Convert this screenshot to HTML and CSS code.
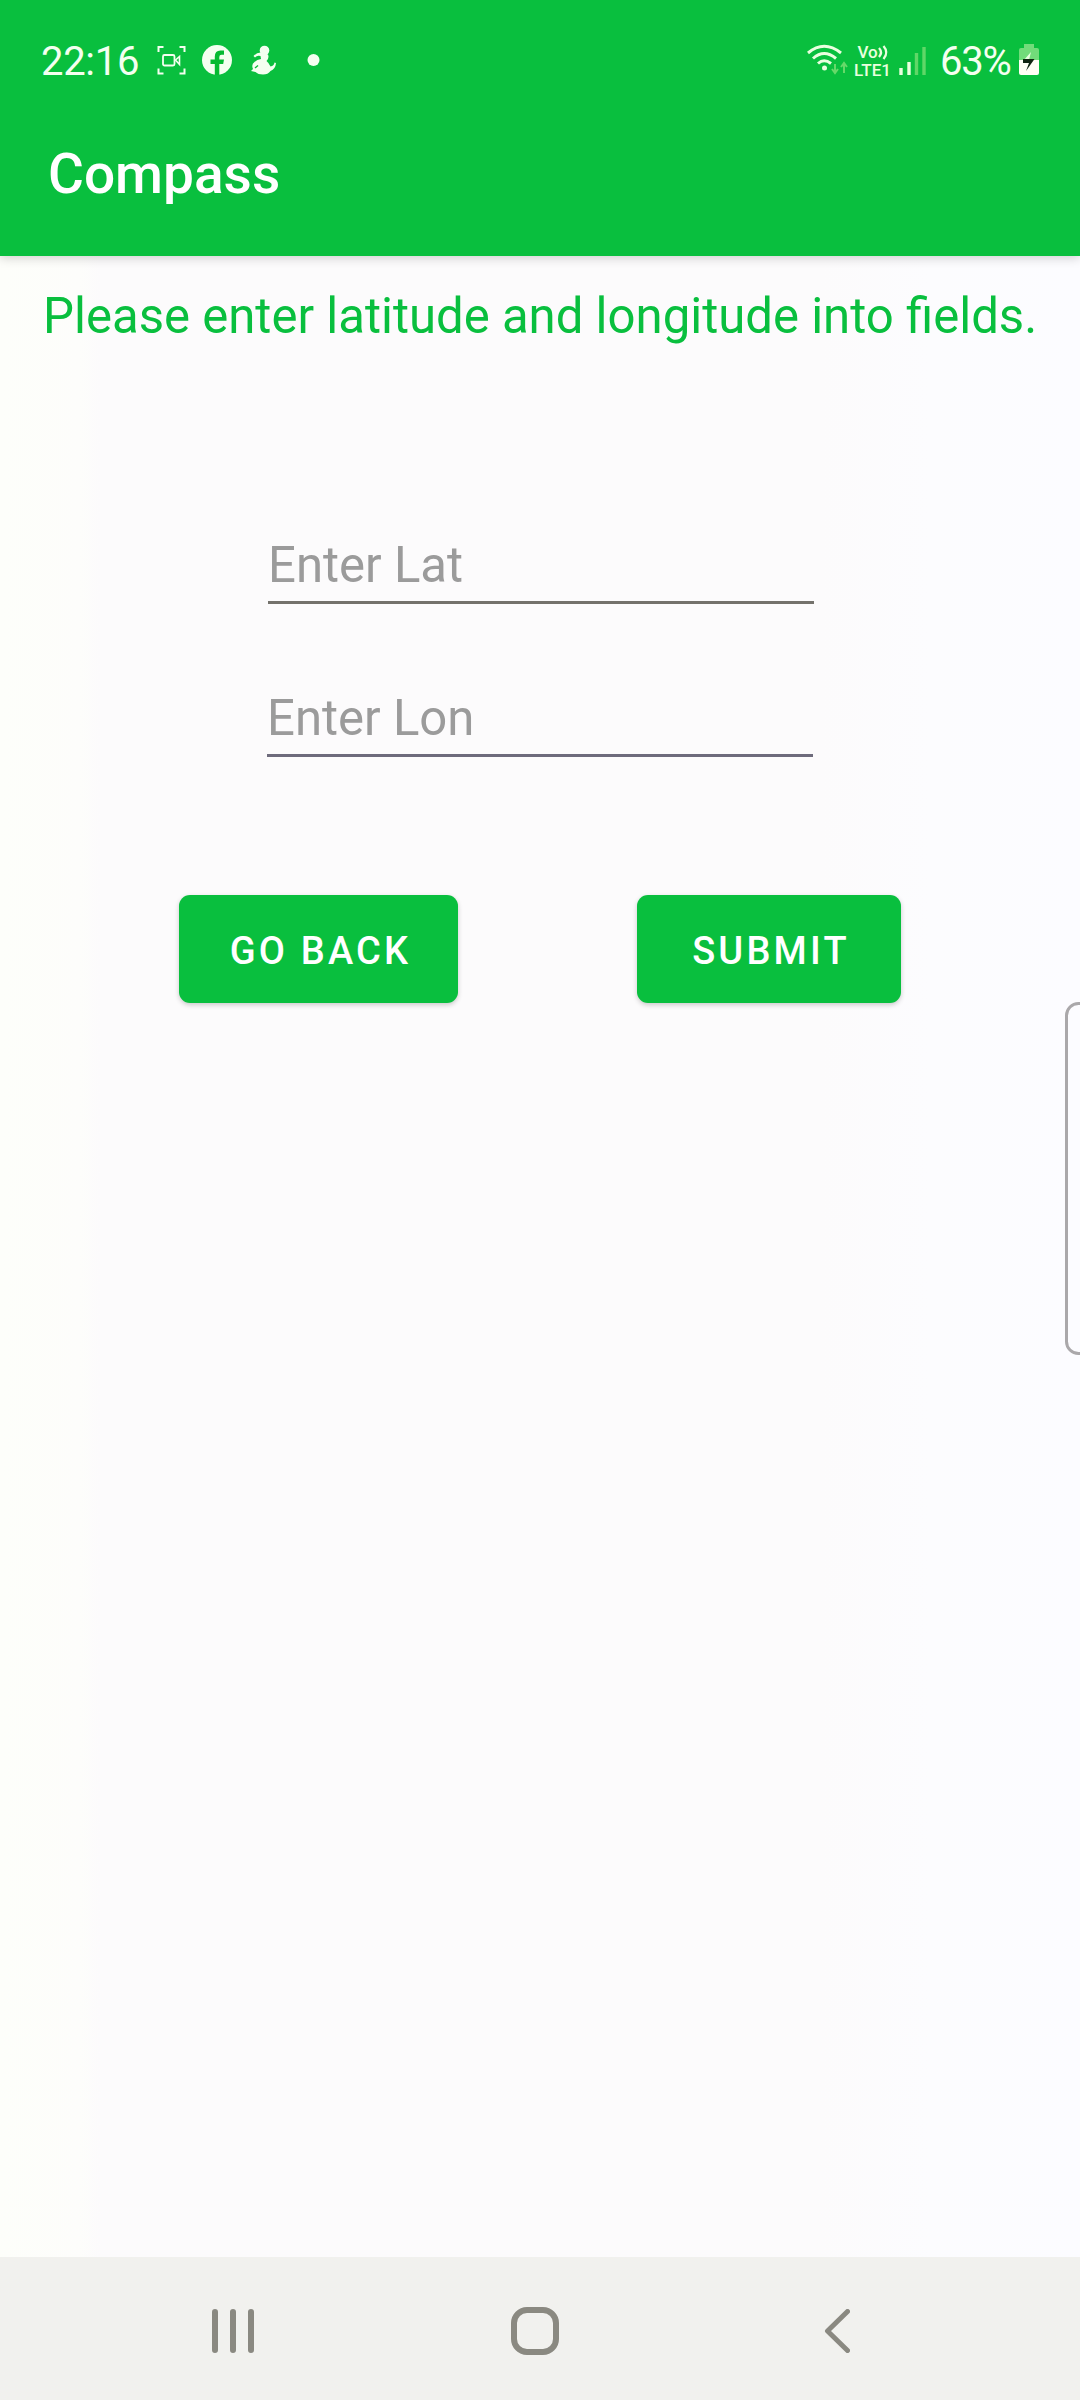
FILE: index.html
```html
<!DOCTYPE html>
<html lang="en">
<head>
<meta charset="utf-8">
<title>Compass</title>
<link rel="stylesheet" href="styles.css">
</head>
<body>
<div class="screen">
  <header class="header">
    <div class="status">
      <span class="clock">22:16</span>
      <svg class="status-left" width="164" height="32" viewBox="0 0 164 32" fill="#f4fff0">
        <path d="M1.500 7V2H6.500M22.500 2H27.500V7M27.500 23.500V28.500H22.500M6.500 28.500H1.500V23.500" fill="none" stroke="#f4fff0" stroke-width="2"/>
        <rect x="6" y="10" width="11.500" height="10.500" rx="1.500" fill="none" stroke="#f4fff0" stroke-width="1.800"/>
        <path d="M18.500 15L22.500 11.500V19.500Z" fill="none" stroke="#f4fff0" stroke-width="1.600"/>
        <circle cx="60" cy="15" r="15"/>
        <path d="M57.800 30V19H53.500V14.500H57.800V11.500Q57.800 5.500 63.500 5.500H67V9.700H64.500Q62.300 9.700 62.300 12V14.500H67L66.200 19H62.300V30Z" fill="#05ba31"/>
        <circle cx="107.500" cy="5.500" r="4.800"/>
        <path d="M96.500 11Q100 7 104.500 7.500L111 9.500Q112.500 13 109.500 16Q112 18 113.500 21.500Q117 21 117.500 17.500L119 18Q118.500 24 113.500 26Q111 29.500 106 29.500Q101 29.500 98.500 27L94 26L96 24Q94 19.500 97.500 17Q100 14.500 104 14L103.500 11Q100 10 98 12.500Z"/>
        <path d="M98 23L101 20.500" fill="none" stroke="#05ba31" stroke-width="1.300"/>
        <circle cx="156.500" cy="15" r="6"/>
      </svg>
      <svg class="status-right" width="126" height="34" viewBox="0 0 126 34" fill="none" stroke="#eaffdf">
        <path d="M2 9Q18 -4.500 35 9M7 14.500Q18 4.500 30 14.500M12 19.500Q18 14 25 19.500" stroke-width="3"/>
        <circle cx="18.500" cy="24" r="2.500" fill="#eaffdf" stroke="none"/>
        <path d="M29 20V28M26 25L29 29L32 25M38 29V20M35 23L38 19L41 23" stroke="#66d969" stroke-width="2"/>
        <text class="cell" x="51.500" y="13.500">Vo</text>
        <path d="M73 4Q77 8.500 73 13M77.500 2Q83 8.500 77.500 15" stroke-width="2.300"/>
        <text class="cell" x="48" y="31.500" textLength="37">LTE1</text>
        <path d="M95 24V31M103 18V31" stroke-width="3.400"/>
        <path d="M110.500 9V31M118 3V31" stroke="#60d767" stroke-width="3.400"/>
      </svg>
      <span class="percent">63%</span>
      <svg class="battery" width="20" height="31" viewBox="0 0 20 31">
        <path d="M0 6Q0 4 2 4H5V0H15V4H18Q20 4 20 6V16H0Z" fill="#71dc7a"/>
        <path d="M0 16H20V29Q20 31 18 31H2Q0 31 0 29Z" fill="#fffff5"/>
        <path d="M12 8L5 16H10Z" fill="#e8ffe0"/>
        <path d="M4 15H15.500L7 27L10 19H4Z" fill="#102510"/>
      </svg>
    </div>
    <h1 class="title">Compass</h1>
  </header>
  <main class="content">
    <p class="intro">Please enter latitude and longitude into fields.</p>
    <form class="form">
      <input class="field field-lat" type="text" placeholder="Enter Lat" aria-label="Latitude">
      <input class="field field-lon" type="text" placeholder="Enter Lon" aria-label="Longitude">
      <div class="actions">
        <button class="button back" type="button">GO BACK</button>
        <button class="button submit" type="button">SUBMIT</button>
      </div>
    </form>
  </main>
  <nav class="nav">
    <svg class="recents" width="42" height="44" viewBox="0 0 42 44"><path d="M3 3V41M21 3V41M39 3V41"/></svg>
    <svg class="home" width="48" height="48" viewBox="0 0 48 48"><rect x="3" y="3" width="42" height="42" rx="13"/></svg>
    <svg width="26" height="44" viewBox="0 0 26 44"><path d="M23.500 2.500L3.500 22L23.500 41.500" stroke-width="5"/></svg>
  </nav>
  <div class="edge-handle"></div>
</div>
</body>
</html>
```
FILE: styles.css
```css
* { box-sizing: border-box; }
body { margin: 0; font-family: Roboto, sans-serif; }
.screen {
  position: relative;
  display: flex;
  flex-direction: column;
  width: 1080px;
  height: 2400px;
  overflow: hidden;
  background: linear-gradient(90deg, #fdfefa 0, #fdfdfb 80px, #fcfbfc 100px, #fcfbfc 820px, #fcfcfe 930px, #fcfcff 100%);
}
.header {
  position: relative;
  height: 256px;
  background: #09bf3e;
  box-shadow: 0 2px 10px rgba(0, 0, 0, .18);
}
.status {
  display: flex;
  height: 124px;
  padding: 0 41px;
  align-items: flex-start;
  color: #f4fff0;
  font-size: 40px;
  line-height: 48px;
}
.clock { width: 116px; margin-top: 38px; letter-spacing: -.3px; }
.status-left { margin-top: 45px; }
.status-right { margin: 44px 8px 0 auto; overflow: visible; }
.percent { width: 79px; margin-top: 38px; letter-spacing: -1.2px; }
.battery { margin-top: 44px; }
.cell { fill: #eaffdf; stroke: none; font-size: 17px; font-weight: 500; }
.title {
  margin: 18px 0 0 48px;
  color: #fff;
  font-size: 55px;
  font-weight: 500;
  line-height: 64px;
}
.content { flex: 1; }
.intro {
  margin: 28px 0 0 43px;
  color: #09bf3e;
  font-size: 49.1px;
  line-height: 64px;
  white-space: nowrap;
}
.form { display: flex; flex-direction: column; padding-top: 164px; }
.field {
  width: 546px;
  height: 92px;
  margin-left: 268px;
  padding: 21px 0 4px;
  border: 0;
  border-bottom: 3px solid #74726c;
  border-radius: 0;
  outline: 0;
  background: transparent;
  color: #444;
  font: 49.1px/64px Roboto, sans-serif;
}
.field::placeholder { color: #9b9b9b; opacity: 1; }
.field-lon { margin: 61px 0 0 267px; border-color: #6e6b7c; }
.actions { display: flex; gap: 179px; padding: 138px 0 0 179px; }
.button {
  height: 108px;
  padding: 4px 0 0 4px;
  border: 0;
  border-radius: 11px;
  background: #09bf3e;
  box-shadow: 0 2px 5px rgba(0, 0, 0, .2);
  color: #fff;
  font: 500 38px/46px Roboto, sans-serif;
  letter-spacing: 3.2px;
}
.back { width: 279px; }
.submit { width: 264px; }
.nav {
  display: flex;
  height: 143px;
  padding: 5px 230px 0 212px;
  align-items: center;
  justify-content: space-between;
  background: #f1f1ee;
}
.nav svg { fill: none; stroke: #8a8981; stroke-width: 6; stroke-linecap: round; stroke-linejoin: round; }
.nav .home { margin-right: 9px; }
.edge-handle {
  position: absolute;
  top: 1002px;
  right: -12px;
  width: 27px;
  height: 353px;
  border: 3px solid #aaa8aa;
  border-radius: 14px;
}
```
